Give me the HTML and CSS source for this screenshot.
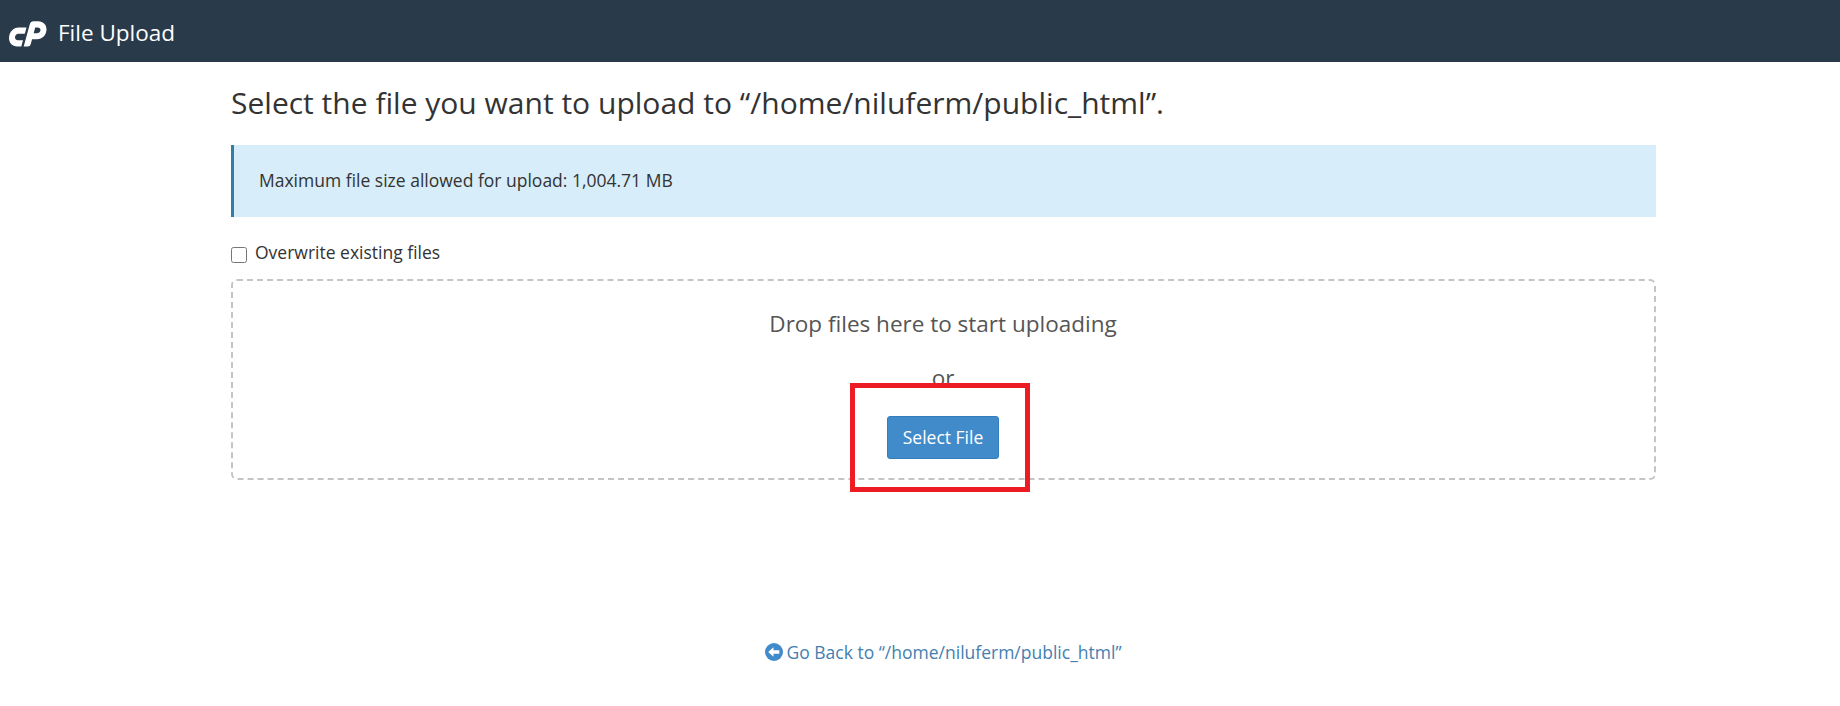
FILE: index.html
```html
<!DOCTYPE html>
<html lang="en">
<head>
<meta charset="utf-8">
<title>File Upload</title>
<link rel="stylesheet" href="styles.css">
</head>
<body>
<header class="topbar">
  <svg class="logo" viewBox="0 0 38 26" width="38" height="26" fill="#fff">
    <path d="M9.500 6.500H17.500L15.800 12.700H9.500C7.300 12.700 6 14.500 6 16.300C6 18.200 7.300 19.300 9 19.300H14L12.300 25.500H8.500C3 25.500 0 21.500 0 17C0 11 4.500 6.500 9.500 6.500Z"/>
    <path d="M20.800 3.200Q21.600 0.300 24.500 0.300H29C34.500 0.300 37.500 4 37.500 8.300C37.500 14 33.300 18.300 28 18.300H22.600L24.300 12.300H27.700C30 12.300 31.500 10.700 31.500 8.900C31.500 7.300 30.300 6.400 28.700 6.400H26.200L21.700 23.300Q21 25.500 18.800 25.500H14.700Z"/>
  </svg>
  <span class="topbar-title">File Upload</span>
</header>
<main class="content">
  <h1 class="heading">Select the file you want to upload to “/home/niluferm/public_html”.</h1>
  <div class="alert">Maximum file size allowed for upload: 1,004.71 MB</div>
  <label class="overwrite"><input class="checkbox" type="checkbox"><span>Overwrite existing files</span></label>
  <section class="dropzone">
    <p class="drop-text">Drop files here to start uploading</p>
    <p class="drop-text drop-or">or</p>
    <div class="picker">
      <button class="button" type="button">Select File</button>
      <span class="highlight"></span>
    </div>
  </section>
  <a class="back">
    <svg class="back-icon" viewBox="0 0 18 18" width="18" height="18"><circle cx="9" cy="9" r="9" fill="#428bca"/><path d="M3.200 9L8.500 4.200V7.300H14.300V10.700H8.500V13.800Z" fill="#fff"/></svg>
    <span>Go Back to “/home/niluferm/public_html”</span>
  </a>
</main>
</body>
</html>
```
FILE: styles.css
```css
* { box-sizing: border-box; }
body { margin: 0; background: #fff; color: #333; font-family: "Open Sans", sans-serif; font-size: 17.5px; line-height: 26px; }
.topbar { display: flex; align-items: flex-start; height: 62px; padding: 21px 9px 0; background: #293a4a; color: #fff; }
.logo { margin-right: 11px; }
.topbar-title { margin-top: -4px; font-size: 22.5px; line-height: 32px; }
.content { display: flex; flex-direction: column; width: 1425px; margin-left: 231px; padding-top: 20px; }
.heading { margin: 0 0 22px; font-size: 30.03px; font-weight: 400; line-height: 41px; white-space: nowrap; }
.alert { height: 72px; padding: 22px 25px; border-left: 3px solid #337ea3; background: #d7edf9; }
.overwrite { display: flex; align-items: center; gap: 8px; height: 26px; margin-top: 22px; }
.checkbox { width: 16px; height: 16px; margin: 5px 0 0; }
.dropzone { display: flex; flex-direction: column; align-items: center; height: 201px; margin-top: 14px; padding: 27px 1px 0 0; border: 2px dashed #c4c4c4; border-radius: 6px; }
.drop-text { margin: 0; color: #555; font-size: 22.5px; line-height: 32px; }
.drop-or { margin-top: 22px; }
.picker { position: relative; margin-top: 22px; }
.button { display: block; width: 112px; height: 43px; padding: 0 0 2px; border: 1px solid #357ebd; border-radius: 3px; background: #428bca; color: #fff; font: inherit; }
.highlight { position: absolute; top: -33px; left: -37px; width: 180px; height: 109px; border: 5px solid #ed1c24; }
.back { display: flex; align-items: center; align-self: center; gap: 4px; margin-top: 159px; padding-right: 1px; color: #4580b0; }
```
